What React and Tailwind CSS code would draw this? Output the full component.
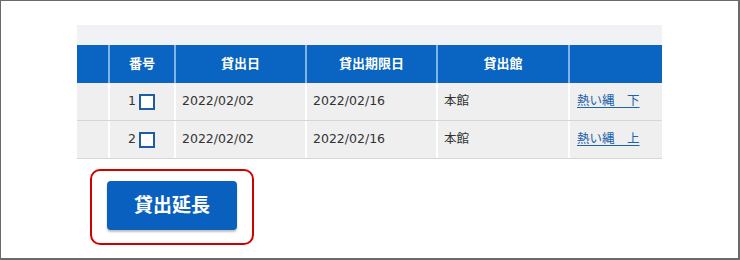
import React from "react";

const font = { fontFamily: '"DejaVu Sans", "Noto Sans CJK JP", sans-serif' };

const cols = "grid grid-cols-[31px_66px_131px_131px_132px_94px]";

function Row({ n, title }) {
  return (
    <div className={`${cols} h-[38px] bg-[#efefef] border-b border-[#d6d6d6] text-[12.5px] text-[#333]`}>
      <div />
      <div className="flex items-center justify-end gap-[3px] pr-[19px] border-l-2 border-white">
        <span>{n}</span>
        <span className="w-[16px] h-[16px] border-[2.5px] border-[#1d5da3] bg-white" />
      </div>
      <div className="flex items-center pl-[6px] border-l-2 border-white">2022/02/02</div>
      <div className="flex items-center pl-[6px] border-l-2 border-white">2022/02/16</div>
      <div className="flex items-center pl-[6px] border-l-2 border-white">本館</div>
      <div className="flex items-center pl-[7px] border-l-2 border-white">
        <a className="text-[#1d63ad] underline underline-offset-2 text-[12.5px]">{title}</a>
      </div>
    </div>
  );
}

export default function App() {
  return (
    <div
      className="w-[740px] h-[260px] bg-white border-t border-l border-r-2 border-b-2 border-[#6a6a6a] overflow-hidden"
      style={font}
    >
      <div className="ml-[76px] mt-[24px] w-[585px]">
        <div className="h-[20px] bg-[#f0f2f5]" />
        <div className={`${cols} h-[38px] bg-[#0964c2] text-white font-bold text-[13px]`}>
          <div />
          <div className="flex items-center justify-center border-l-2 border-[#7fb4e6]">番号</div>
          <div className="flex items-center justify-center border-l-2 border-[#7fb4e6]">貸出日</div>
          <div className="flex items-center justify-center border-l-2 border-[#7fb4e6]">貸出期限日</div>
          <div className="flex items-center justify-center border-l-2 border-[#7fb4e6]">貸出館</div>
          <div className="border-l-2 border-[#7fb4e6]" />
        </div>
        <Row n="1" title="熱い縄　下" />
        <Row n="2" title="熱い縄　上" />
      </div>
      <div className="ml-[89px] mt-[10px] w-[164px] h-[76px] border-2 border-[#d40000] rounded-[10px] pl-[15px] pt-[10px]">
        <button className="w-[130px] h-[49px] bg-[#0a60bf] rounded-[4px] text-white font-bold text-[19px] shadow-[0_2px_2px_rgba(0,0,0,0.25)]">
          貸出延長
        </button>
      </div>
    </div>
  );
}
